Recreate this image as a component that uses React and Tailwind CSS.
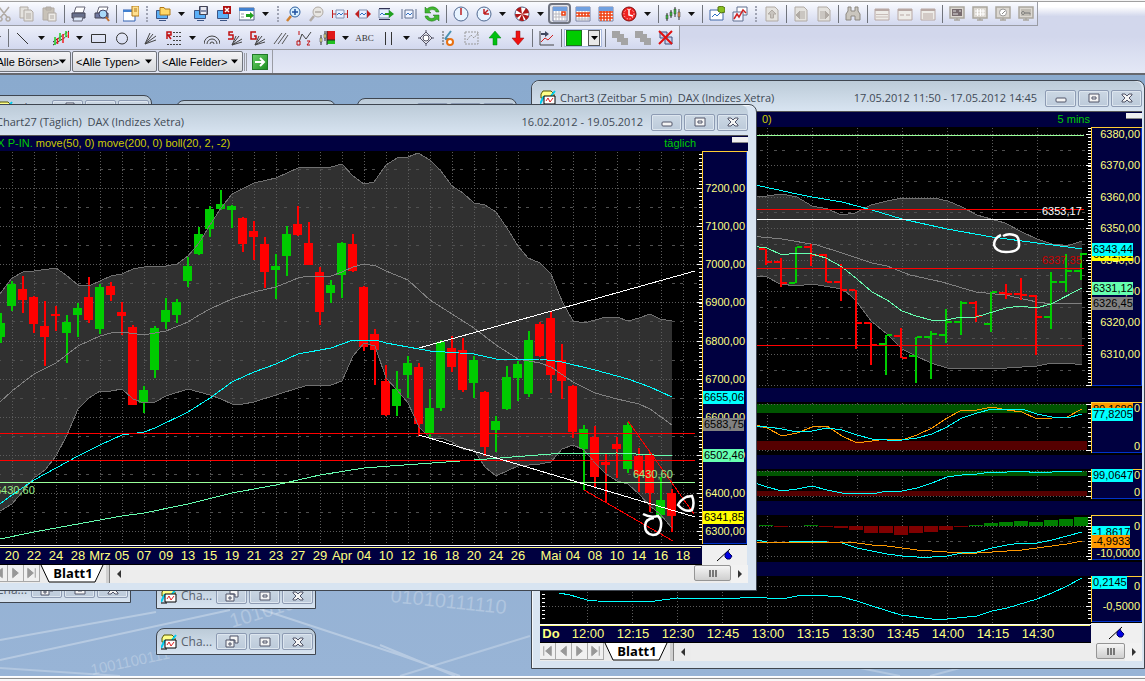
import React from 'react';

const RED = '#ff0000';
const GREEN = '#00cc00';
const NAVY = '#000040';
const AXIS = '#ffff80';

// [bodyTop, bodyBottom, high, low, up]
const CANDLES = [
    [323, 337, 313, 343, 1], [284, 306, 281, 311, 1], [289, 300, 276, 313, 0], [297, 324, 296, 333, 0],
    [326, 337, 301, 366, 0], [314, 316, 306, 331, 0], [322, 333, 315, 363, 1], [308, 315, 303, 337, 1],
    [297, 320, 277, 323, 0], [287, 329, 284, 334, 1], [286, 295, 282, 301, 0], [312, 316, 302, 335, 0],
    [327, 405, 325, 405, 0], [390, 403, 386, 413, 1], [328, 370, 326, 378, 1], [310, 322, 298, 329, 1],
    [302, 315, 299, 323, 1], [266, 281, 257, 287, 1], [234, 254, 227, 255, 1], [209, 229, 206, 237, 1],
    [204, 209, 190, 210, 1], [206, 210, 205, 228, 1], [218, 244, 217, 252, 0], [231, 237, 221, 260, 0],
    [244, 272, 237, 288, 0], [266, 270, 254, 299, 1], [234, 256, 226, 276, 1], [224, 235, 206, 236, 0],
    [243, 265, 222, 265, 0], [272, 312, 267, 325, 0], [285, 293, 280, 303, 1], [243, 275, 242, 298, 1],
    [244, 271, 234, 272, 0], [287, 347, 286, 351, 0], [334, 350, 329, 385, 0], [381, 415, 365, 416, 0],
    [389, 406, 371, 416, 1], [363, 375, 356, 398, 1], [367, 424, 363, 436, 0], [408, 433, 389, 437, 1],
    [342, 408, 340, 411, 1], [348, 367, 336, 372, 0], [350, 390, 338, 392, 0], [360, 383, 356, 398, 1],
    [392, 447, 391, 456, 0], [421, 430, 416, 452, 1], [377, 409, 366, 410, 1], [364, 378, 361, 401, 1],
    [340, 394, 331, 397, 1], [324, 356, 322, 357, 0], [318, 375, 312, 393, 0], [360, 381, 344, 399, 0],
    [386, 432, 385, 438, 0], [429, 449, 425, 490, 1], [437, 477, 426, 488, 0], [462, 465, 454, 503, 0],
    [444, 449, 437, 478, 0], [425, 469, 422, 473, 1], [456, 475, 448, 492, 0], [455, 493, 452, 512, 0],
    [500, 515, 477, 518, 1], [493, 516, 489, 532, 0],
];

const DAY_UPPER = '-24,330 0,294 12,278 23,272 34,271 56,268 66,275 78,285 89,286 100,281 111,276 122,274 133,269 144,267 166,266 177,264 188,256 199,243 210,225 221,208 232,194 254,183 276,178 298,168 309,167 331,167 342,164 353,176 364,184 374,182 386,165 397,158 408,157 418,153 430,160 441,171 452,186 463,193 474,203 485,205 496,212 507,228 518,246 528,258 540,263 551,274 562,301 573,321 584,323 595,320 606,317 617,317 628,321 639,318 650,314 660,319 672,321';
const DAY_LOWER = '672,528 660,514 650,506 639,494 628,484 617,481 606,474 595,463 584,450 573,445 562,449 551,462 540,464 518,466 507,471 496,476 485,467 474,450 463,449 452,442 441,438 430,438 419,427 408,403 397,390 386,378 375,346 364,343 353,356 342,381 331,385 320,386 309,385 298,388 276,395 254,402 243,404 232,404 221,399 210,395 188,389 166,396 155,402 144,403 133,399 122,389 111,391 100,391 89,398 78,409 67,435 56,456 45,470 34,478 12,504 0,511 -24,520';
const DAY_MID = '0,402 12,391 34,374 56,363 78,346 100,336 111,333 122,332 144,335 166,331 188,322 199,315 210,309 232,299 254,292 276,287 298,278 309,276 331,276 342,272 353,267 364,264 376,266 386,271 408,280 430,300 452,314 474,328 496,345 518,359 540,363 551,367 573,382 595,393 617,399 639,404 650,409 672,425';
const DAY_MA50 = '0,504 12,495 34,480 56,468 78,456 100,445 122,435 144,432 155,428 188,412 210,398 232,382 254,372 276,364 298,354 331,348 353,340 376,340 386,343 408,347 430,351 474,354 496,359 507,360 540,359 562,362 595,370 617,376 628,379 650,387 672,397';
const DAY_MA200 = '0,539 34,532 78,524 122,516 144,513 188,504 232,493 276,485 320,475 364,468 390,466 474,460 551,454 617,453 672,456';

const DAYS = [
    ['20', 12], ['22', 34], ['24', 56], ['28', 78], ['Mrz', 100], ['05', 122], ['07', 144], ['09', 166],
    ['13', 188], ['15', 210], ['19', 232], ['21', 254], ['23', 276], ['27', 298], ['29', 320], ['Apr', 342],
    ['04', 364], ['10', 386], ['12', 408], ['16', 430], ['18', 452], ['20', 474], ['24', 496], ['26', 518],
    ['Mai', 551], ['04', 573], ['08', 595], ['10', 617], ['14', 639], ['16', 661], ['18', 683],
];
const DAY_PRICES = [
    ['7200,00', 188], ['7100,00', 226], ['7000,00', 264], ['6900,00', 302], ['6800,00', 341],
    ['6700,00', 379], ['6600,00', 417], ['6500,00', 455], ['6400,00', 493], ['6300,00', 531],
];

// [high, low, open, close, up]
const BARS = [
    [248, 264, 248, 261, 0], [257, 286, 261, 282, 0], [246, 282, 282, 246, 1], [243, 265, 246, 254, 0],
    [253, 281, 254, 281, 0], [263, 300, 281, 289, 0], [289, 348, 289, 322, 0], [322, 364, 322, 344, 0],
    [334, 374, 343, 334, 1], [327, 357, 335, 357, 0], [336, 382, 355, 336, 1], [330, 378, 336, 333, 1],
    [308, 342, 334, 321, 1], [300, 334, 321, 302, 1], [300, 321, 302, 315, 0], [291, 331, 323, 291, 1],
    [283, 298, 292, 293, 0], [277, 299, 293, 294, 0], [294, 354, 295, 316, 0], [271, 328, 316, 281, 1],
    [253, 291, 281, 270, 1], [252, 279, 270, 253, 1],
];
const MIN_UPPER = '751,195 767,195 782,193 797,196 812,205 828,208 841,214 855,212 871,204 887,200 902,197 934,197 948,200 962,206 977,214 1005,222 1022,231 1037,238 1052,243 1067,245 1082,240';
const MIN_LOWER = '1082,364 1067,362 1052,362 1037,365 992,368 947,367 931,362 916,355 902,348 887,333 871,320 857,301 850,294 842,288 812,283 797,285 780,283 767,276 751,275';
const MIN_MID = '751,235 782,238 817,244 842,252 872,262 887,265 910,274 942,281 976,291 1005,294 1037,301 1052,303 1082,302';
const MIN_MA50 = '751,183 797,193 812,196 842,201 872,209 902,218 947,228 992,236 1037,242 1053,244 1082,248';
const MIN_FAST = '751,245 767,247 782,254 797,252 812,253 826,257 842,266 857,278 872,291 887,299 902,310 916,315 931,319 946,319 961,316 976,316 1006,307 1020,305 1036,307 1051,303 1082,287';
const MIN_PRICES = [
    ['6380,00', 133], ['6370,00', 164], ['6360,00', 196], ['6350,00', 227],
    ['6340,00', 259], ['6330,00', 290], ['6320,00', 321], ['6310,00', 353],
];
const TIMES = ['12:00', '12:15', '12:30', '12:45', '13:00', '13:15', '13:30', '13:45', '14:00', '14:15', '14:30'];

const STOCH_K = [423, 427, 435, 432, 426, 425, 435, 442, 440, 438, 439, 434, 427, 417, 409, 409, 406, 409, 411, 418, 417, 416, 408];
const STOCH_D = [425, 426, 428, 431, 430, 427, 429, 434, 438, 439, 439, 437, 433, 426, 417, 412, 408, 408, 408, 413, 416, 417, 413];
const RSI = [481, 486, 490, 488, 485, 489, 492, 492, 493, 490, 490, 487, 482, 476, 474, 473, 471, 471, 470, 472, 471, 470, 470];
const MACD = [538, 541, 542, 540, 540, 541, 542, 547, 550, 553, 555, 556, 556, 555, 552, 551, 547, 544, 542, 542, 539, 535, 531];
const SIGNAL = [541, 541, 541, 541, 541, 541, 541, 542, 544, 545, 547, 549, 550, 551, 552, 552, 551, 550, 549, 547, 545, 543, 540];
const HISTO = [1, -1, 0, 1, -1, -2, -4, -7, -7, -9, -7, -6, -4, -1, 1, 3, 4, 5, 4, 6, 7, 9];
const MOMENTUM = '559,592 570,594 587,599 597,600 637,601 655,600 677,597 723,598 757,596 767,597 782,598 797,595 813,594 842,596 857,600 872,605 901,614 932,618 947,618 977,615 992,610 1007,607 1037,598 1052,592 1067,585 1082,577';

const series = (ys) => ys.map((y, i) => `${752 + i * 15},${y}`).join(' ');
const range = (from, to, step) => {
    const out = [];
    for (let v = from; v <= to; v += step) out.push(v);
    return out;
};

function Line({ points, color, width = 1, fill = 'none' }) {
    return <polyline points={points} fill={fill} stroke={color} strokeWidth={width} shapeRendering="crispEdges" />;
}

function Level({ x1, x2, y, color }) {
    return <rect x={x1} y={y} width={x2 - x1} height="1" fill={color} shapeRendering="crispEdges" />;
}

function Dotted({ x1, x2, y1, y2 }) {
    return <path d={`M${x1} ${y1 + 0.5}L${x2} ${y2 + 0.5}`} stroke="#5c5c5c" strokeDasharray="1 2" shapeRendering="crispEdges" />;
}

function Dashes({ x1, x2, y }) {
    return <path d={`M${x1} ${y + 0.5}H${x2}`} stroke="#505050" strokeDasharray="3 11 3 5" shapeRendering="crispEdges" />;
}

function AxisBox({ x, y, w, h }) {
    return (
        <g shapeRendering="crispEdges">
            <rect x={x} y={y} width={w} height={h} fill={NAVY} />
            <path d={`M${x + w - 0.5} ${y}V${y + h - 0.5}H${x}`} fill="none" stroke="#0033cc" />
            <path d={`M${x + 0.5} ${y + h}V${y + 0.5}H${x + w}`} fill="none" stroke="#ffcc33" />
        </g>
    );
}

function Ticks({ x, from, to, step }) {
    return (
        <g fill="#fff" shapeRendering="crispEdges">
            {range(from, to, step).map((y) => <rect key={y} x={x - 3} y={Math.round(y)} width="3" height="1" />)}
        </g>
    );
}

function Tag({ x, y, w = 41, color, text }) {
    return (
        <g>
            <rect x={x} y={y} width={w} height="13" fill={color} shapeRendering="crispEdges" />
            <text x={x + 1} y={y + 10} fill="#000">{text}</text>
        </g>
    );
}

function PinIcon({ x, y }) {
    return (
        <g transform={`translate(${x} ${y})`}>
            <path d="M0 14L13 2" stroke="#000" fill="none" />
            <path d="M8 7l3-3 1 2 3 3-2 3h-3l-2-2z" fill="#0000e0" stroke="#000060" />
        </g>
    );
}

function DailyChart() {
    return (
        <svg className="block w-[771px] h-[414px] bg-black font-['Liberation_Sans',sans-serif] text-[11px]" viewBox="-24 151 771 414">
            <polygon points={`${DAY_UPPER} ${DAY_LOWER}`} fill="#303030" />
            {DAYS.map(([label, x]) => <Dotted key={label + x} x1={x + 0.5} x2={x + 0.5} y1={151} y2={544} />)}
            {DAY_PRICES.map(([label, y]) => <Dotted key={label} x1={-24} x2={699} y1={y} y2={y} />)}
            {range(169, 530, 38.1).map((y) => <Dashes key={y} x1={-24} x2={699} y={Math.round(y)} />)}
            {CANDLES.map(([top, bottom, high, low, up], i) => (
                <g key={i} fill={up ? GREEN : RED} shapeRendering="crispEdges">
                    <rect x={i * 11} y={high} width="2" height={low - high} />
                    <rect x={i * 11 - 4} y={top} width="9" height={bottom - top} />
                </g>
            ))}
            <Line points={DAY_UPPER} color="#707070" />
            <Line points={DAY_LOWER} color="#707070" />
            <Line points={DAY_MID} color="#808080" />
            <Line points={DAY_MA50} color="#00ffff" />
            <Line points={DAY_MA200} color="#66ffb0" />
            <Level x1={-24} x2={695} y={433} color={RED} />
            <Level x1={-24} x2={695} y={460} color={RED} />
            <Level x1={-24} x2={695} y={482} color="#99ff99" />
            <Line points="419,348 695,271" color="#fff" />
            <Line points="419,435 695,517" color="#fff" />
            <Line points="584,490 673,541" color={RED} />
            <Line points="628,421 694,514" color={RED} />
            <text x="633" y="478" fill="#99ee88">6430,60</text>
            <text x="-5" y="494" fill="#99ee88">6430,60</text>
            <path d="M643 514q7 4 15 2q4 4 3 10q-1 9-8 9q-8-1-8-9q0-7 9-8" fill="none" stroke="#fff" strokeWidth="2.500" />
            <path d="M686 497l6-1q3 7 0 14q-7 3-14-5q2-5 10-9" fill="none" stroke="#fff" strokeWidth="2.500" />

            <Ticks x={702} from={154} to={542} step={3.81} />
            <g fill="#fff">{DAY_PRICES.map(([label, y]) => <rect key={label} x="697" y={y} width="5" height="1" />)}</g>
            <AxisBox x={702} y={151} w={45} h={393} />
            <g fill={AXIS} textAnchor="end">
                {DAY_PRICES.map(([label, y]) => <text key={label} x="745" y={y + 4}>{label}</text>)}
            </g>
            <Tag x={703} y={391} color="#00ffff" text="6655,06" />
            <Tag x={703} y={418} color="#808080" text="6583,75" />
            <Tag x={703} y={449} color="#66ffb0" text="6502,46" />
            <Tag x={703} y={511} color="#ffff00" text="6341,85" />

            <g shapeRendering="crispEdges">
                <rect x="-24" y="544" width="726" height="21" fill="#000" />
                <rect x="-24" y="545" width="726" height="1" fill="#fff" />
                <rect x="-24" y="546" width="726" height="18" fill={NAVY} />
                <rect x="-24" y="547" width="725" height="1" fill={AXIS} />
                <rect x="702" y="545" width="45" height="20" fill="#f0f0f0" />
                <rect x="702" y="544" width="45" height="1" fill="#000" />
            </g>
            <g fill={AXIS} textAnchor="middle" className="text-[13px]">
                {DAYS.map(([label, x]) => <text key={label + x} x={x} y="560">{label}</text>)}
            </g>
            <PinIcon x={717} y={547} />
        </svg>
    );
}

function MinuteChart() {
    return (
        <svg className="block w-[602px] h-[516px] shrink-0 bg-black font-['Liberation_Sans',sans-serif] text-[11px]" viewBox="540 126 602 516">
            <polygon points={`${MIN_UPPER} ${MIN_LOWER}`} fill="#303030" />
            {TIMES.map((t, i) => (
                <g key={t}>
                    <Dotted x1={587.5 + i * 45} x2={587.5 + i * 45} y1={126} y2={384} />
                    <Dotted x1={587.5 + i * 45} x2={587.5 + i * 45} y1={401} y2={452} />
                    <Dotted x1={587.5 + i * 45} x2={587.5 + i * 45} y1={468} y2={498} />
                    <Dotted x1={587.5 + i * 45} x2={587.5 + i * 45} y1={514} y2={559} />
                    <Dotted x1={587.5 + i * 45} x2={587.5 + i * 45} y1={575} y2={621} />
                </g>
            ))}
            {[133, 164, 196, 227, 259, 290, 321, 353, 384].map((y) => <Dotted key={y} x1={540} x2={1087} y1={y} y2={y} />)}
            {[149, 180, 211, 243, 274, 306, 337, 369].map((y) => <Dashes key={y} x1={540} x2={1087} y={y} />)}
            <Line points={MIN_UPPER} color="#707070" />
            <Line points={MIN_LOWER} color="#707070" />
            <Line points={MIN_MID} color="#808080" />
            {BARS.map(([high, low, open, close, up], i) => (
                <g key={i} fill={up ? GREEN : RED} shapeRendering="crispEdges">
                    <rect x={765 + i * 15} y={high} width="2" height={low - high} />
                    <rect x={759 + i * 15} y={open - 1} width="6" height="2" />
                    <rect x={767 + i * 15} y={close - 1} width="5" height="2" />
                </g>
            ))}
            <Line points={MIN_MA50} color="#00ffff" />
            <Line points={MIN_FAST} color="#66ffb0" />
            <Level x1={540} x2={1084} y={134} color="#99ff99" />
            <Level x1={540} x2={1084} y={208} color={RED} />
            <Level x1={540} x2={1084} y={218} color="#fff" />
            <Level x1={540} x2={1084} y={267} color={RED} />
            <Level x1={540} x2={1084} y={344} color={RED} />
            <text x="1042" y="214" fill="#fff">6353,17</text>
            <text x="1042" y="263" fill="#cc0000">6337,35</text>
            <path d="M1001 234q-7 3-7 10q2 7 12 7q14 0 13-8q0-8-5-9q-6-2-11 1" fill="none" stroke="#fff" strokeWidth="2.500" />

            {/* indicator captions */}
            <g fill={NAVY}>
                <rect x="540" y="387" width="602" height="14" />
                <rect x="540" y="454" width="602" height="14" />
                <rect x="540" y="500" width="602" height="14" />
                <rect x="540" y="561" width="602" height="14" />
            </g>
            <g shapeRendering="crispEdges">
                <rect x="540" y="403" width="547" height="9" fill="#005500" />
                <rect x="540" y="440" width="547" height="9" fill="#550000" />
                <rect x="540" y="470" width="547" height="5" fill="#005500" />
                <rect x="540" y="490" width="547" height="5" fill="#550000" />
            </g>
            {[403, 449, 470, 495, 525, 555, 585, 605].map((y) => <Dotted key={y} x1={540} x2={1087} y1={y} y2={y} />)}
            <Dashes x1={540} x2={1087} y={426} />
            <Dashes x1={540} x2={1087} y={540} />
            <Line points={series(STOCH_K)} color="#ff9900" />
            <Line points={series(STOCH_D)} color="#00ffff" />
            <Line points={series(RSI)} color="#00ffff" />
            {HISTO.map((v, i) => (
                <rect key={i} x={759 + i * 15} y={v > 0 ? 525 - v : 525} width="14" height={Math.abs(v)} fill={v > 0 ? '#008000' : '#800000'} />
            ))}
            <Line points={series(MACD)} color="#00ffff" />
            <Line points={series(SIGNAL)} color="#ff9900" />
            <Line points={MOMENTUM} color="#00ffff" />

            <Ticks x={1091} from={127} to={384} step={3.14} />
            <Ticks x={1091} from={403} to={450} step={4.6} />
            <Ticks x={1091} from={470} to={496} step={5} />
            <Ticks x={1091} from={516} to={558} step={3} />
            <Ticks x={1091} from={577} to={620} step={4} />
            <Ticks x={545} from={577} to={620} step={4} />
            <g fill="#fff">
                {[133, 164, 196, 227, 259, 290, 321, 353, 384, 403, 449, 495, 525, 555, 605].map((y) => <rect key={y} x="1086" y={y} width="5" height="1" />)}
            </g>
            <AxisBox x={1091} y={126} w={51} h={259} />
            <AxisBox x={1091} y={401} w={51} h={51} />
            <AxisBox x={1091} y={468} w={51} h={30} />
            <AxisBox x={1091} y={514} w={51} h={45} />
            <AxisBox x={1091} y={575} w={51} h={46} />
            <g fill={AXIS} textAnchor="end">
                {MIN_PRICES.map(([label, y]) => <text key={label} x="1140" y={y + 4}>{label}</text>)}
                <text x="1140" y="411">0</text>
                <text x="1140" y="449">0</text>
                <text x="1140" y="478">0</text>
                <text x="1140" y="495">0</text>
                <text x="1140" y="529">0</text>
                <text x="1140" y="556">-10,0000</text>
                <text x="1140" y="589">0</text>
                <text x="1140" y="609">-0,5000</text>
            </g>
            <Tag x={1092} y={247} color="#ffff00" text="6341,81" />
            <Tag x={1092} y={242} color="#00ffff" text="6343,44" />
            <Tag x={1092} y={281} color="#66ffb0" text="6331,12" />
            <Tag x={1092} y={296} color="#808080" text="6326,45" />
            <Tag x={1092} y={402} color="#ff9900" text="80,1689" />
            <Tag x={1092} y={407} color="#00ffff" text="77,8205" />
            <Tag x={1092} y={468} color="#00ffff" text="99,0647" />
            <Tag x={1092} y={525} w={38} color="#00ffff" text="-1,8617" />
            <Tag x={1092} y={534} w={38} color="#ff9900" text="-4,9933" />
            <Tag x={1092} y={575} w={35} color="#00ffff" text="0,2145" />

            <g shapeRendering="crispEdges">
                <rect x="540" y="622" width="551" height="20" fill="#000" />
                <rect x="540" y="623" width="551" height="1" fill="#fff" />
                <rect x="540" y="624" width="551" height="17" fill={NAVY} />
                <rect x="540" y="624" width="550" height="1" fill={AXIS} />
                <rect x="1091" y="622" width="51" height="20" fill="#f0f0f0" />
            </g>
            <g fill={AXIS} textAnchor="middle" className="text-[13px]">
                <text x="551" y="637" fontWeight="bold">Do</text>
                {TIMES.map((t, i) => <text key={t} x={588 + i * 45} y="637">{t}</text>)}
            </g>
            <PinIcon x={1109} y={624} />
        </svg>
    );
}

function ChartIcon() {
    return (
        <svg className="size-4 shrink-0" viewBox="0 0 16 16">
            <path d="M3 1h8l3 3v4H1V4z" fill="#ffff88" stroke="#555500" />
            <path d="M0 14L4 6M11 6l4-5" stroke="#00ccee" strokeWidth="2" />
            <path d="M4 6h11v8H4z" fill="#fff" stroke="#000" />
            <path d="M6 11l2-3 2 4 3-4" stroke="#e02020" fill="none" />
            <path d="M0 15h6" stroke="#000" />
        </svg>
    );
}

const WIN_GLYPHS = {
    Minimieren: <rect x="3" y="7" width="10" height="4" rx="1" />,
    Maximieren: <path d="M3 3h10v8H3zM6 6h4v2H6z" />,
    Wiederherstellen: <path d="M6 1h8v7h-3v-3H6zM2 5h8v7H2zM5 8h2v2H5z" />,
    Schließen: <path d="M3 3h3l2 2 2-2h3v1l-3 3 3 3v1h-3l-2-2-2 2H3v-1l3-3-3-3z" />,
};

function WinButtons({ names }) {
    return (
        <div className="flex gap-0.5">
            {names.map((name) => (
                <button key={name} type="button" aria-label={name} className="w-[31px] h-[17px] flex items-center justify-center rounded-xs border border-[#8d9bb3] bg-linear-to-b from-[#ccd8e4] to-[#bccada] shadow-[inset_0_0_0_1px_#dde6ef]">
                    <svg className="w-4 h-[14px]" viewBox="0 0 16 14" fill="#f4f4f4" stroke="#505468">{WIN_GLYPHS[name]}</svg>
                </button>
            ))}
        </div>
    );
}

function MiniWindow({ className }) {
    return (
        <section className={`absolute w-40 h-[27px] flex items-center px-1 gap-1 rounded-t-lg border border-[#3f4650] bg-linear-to-b from-[#bccbd8] to-[#d8e4f1] ${className}`}>
            <ChartIcon />
            <span className="flex-1 font-['Open_Sans',sans-serif] text-xs leading-4 text-[#56616d]">Cha...</span>
            <WinButtons names={['Wiederherstellen', 'Maximieren', 'Schließen']} />
        </section>
    );
}

function SheetBar({ thumb }) {
    const arrows = [
        ['Erstes Blatt', 'M4 3v10M12 3v10L6 8z'],
        ['Voriges Blatt', 'M11 3v10L5 8z'],
        ['Nächstes Blatt', 'M5 3v10l6-5z'],
        ['Letztes Blatt', 'M12 3v10M4 3v10l6-5z'],
    ];
    return (
        <div className="flex h-[18px] bg-[#ececec] items-stretch">
            {arrows.map(([label, d]) => (
                <button key={label} type="button" aria-label={label} className="w-4 h-[17px] shrink-0 bg-[#f0f0f0] border-r border-b border-[#a8a8a8]">
                    <svg className="w-full h-full" viewBox="0 0 16 16" fill="#989898" stroke="#989898"><path d={d} /></svg>
                </button>
            ))}
            <button type="button" className="relative w-[66px] shrink-0 pb-1 font-['Open_Sans'] text-[13px] leading-4 font-bold text-black">
                <svg className="absolute inset-0 w-full h-full" viewBox="0 0 66 18" preserveAspectRatio="none">
                    <path d="M1 0L9 17H55L63 0z" fill="#fff" />
                    <path d="M1 0L9 17H55L63 0" fill="none" stroke="#000" />
                </svg>
                <span className="relative">Blatt1</span>
            </button>
            <span className="w-1 bg-[#d0d0d0] border-r border-[#808080]" />
            <button type="button" aria-label="Nach links" className="w-[17px] flex items-center justify-center">
                <svg className="size-2" viewBox="0 0 8 8"><path d="M6 0v8L2 4z" fill="#333" /></svg>
            </button>
            <div className="flex-1 flex justify-end bg-[#ededed]">
                <div className={`${thumb} h-4 flex items-center justify-center gap-px rounded-xs border border-[#959595] bg-linear-to-b from-[#f5f5f5] to-[#cfcfcf]`}>
                    <i className="w-0.5 h-[7px] bg-[#777]" />
                    <i className="w-0.5 h-[7px] bg-[#777]" />
                    <i className="w-0.5 h-[7px] bg-[#777]" />
                </div>
            </div>
            <button type="button" aria-label="Nach rechts" className="w-[17px] flex items-center justify-center bg-[#f2f2f2]">
                <svg className="size-2" viewBox="0 0 8 8"><path d="M2 0v8l4-4z" fill="#333" /></svg>
            </button>
        </div>
    );
}

function ChartWindow({ className, title, symbol, period, caption, interval, thumb, children }) {
    return (
        <section className={`absolute flex flex-col rounded-t-lg border border-[#3f4650] shadow-[inset_1px_1px_0_#f4f8fc] bg-[#d8e4f1] ${className}`}>
            <header className="h-[30px] flex items-center gap-1 pt-1 rounded-t-lg bg-linear-to-b from-[#bccbd8] to-[#d8e4f1] pl-2 font-['Open_Sans',sans-serif] text-[11px] leading-4 text-[#3f4a56] whitespace-nowrap">
                <ChartIcon />
                <h2 className="whitespace-pre">{title}  {symbol}</h2>
                <span className="ml-auto mr-1">{period}</span>
                <WinButtons names={['Minimieren', 'Maximieren', 'Schließen']} />
            </header>
            <div className="ml-2 flex flex-col border-t border-[#555] border-b-white">
                <div className="h-[15px] flex items-center bg-[#000040] font-['Liberation_Sans',sans-serif] text-[11px] leading-[15px] text-[#cccc00]">
                    {caption}
                    <span className="ml-auto text-[#00cc00]">{interval}</span>
                    <span className="w-4 h-[6px] mb-2 ml-9 bg-[#f0f0f0] border-b border-[#888]" />
                </div>
                {children}
                <SheetBar thumb={thumb} />
            </div>
        </section>
    );
}

const GREY = '#b0aaa4';
const page = <path d="M2 1h9l3 3v11H2z" fill="#e4e2de" stroke={GREY} />;
const monitor = <path d="M1.500 4.500h11v8h-11zM4 14.500h7" fill="#5cb0f8" stroke="#3c5484" />;
const greyScreen = <path d="M1 1h14v11H1zM5 14h6M8 12v2" fill="#dcd8d2" stroke="#aaa69e" strokeWidth="1.5" />;
const dial = <circle cx="8" cy="8" r="7" fill="#e8f4ff" stroke="#506890" />;
const calendar = (
    <>
        <path d="M1 1h14v14H1z" fill="#fff" stroke="#7880a0" />
        <path d="M1 1h14v4H1z" fill="#70a0e0" />
    </>
);
const smallFan = <path d="M5 15l4-9M5 15l7-9M5 15l10-6M5 15l10-3" stroke="#444" fill="none" />;
const greyPanel = (
    <>
        <path d="M1 3h14v11H1z" fill="#eeece8" stroke="#b8a8a4" />
        <path d="M1 3h14v2H1z" fill="#b8a8a4" />
    </>
);

const ICONS = {
    cut: <path d="M3 1l8 10M13 1L5 11M4 11a2 2 0 1 0 .1 0M12 11a2 2 0 1 0 .1 0" fill="none" stroke={GREY} strokeWidth="1.5" />,
    copy: <><path d="M1 1h8v11H1z" fill="#e4e2de" stroke={GREY} /><path d="M5 4h7l2 2v9H5zM7 8h5M7 10h5M7 12h5" fill="#e4e2de" stroke={GREY} /></>,
    paste: <><path d="M1 2h11v12H1zM4 1h5v3H4z" fill="#c8c2b8" stroke={GREY} /><path d="M6 7h8v8H6zM8 10h4M8 12h4" fill="#eceae6" stroke={GREY} /></>,
    print: <><path d="M5 1h9l-2 6H3z" fill="#fff" stroke="#667" /><path d="M1 7h13v5H1z" fill="#68708c" stroke="#445" /><path d="M3 11h9l-1 4H2z" fill="#dde8f8" stroke="#667" /></>,
    preview: <><path d="M5 1h9l-2 6H3z" fill="#fff" stroke="#667" /><path d="M1 7h13v5H1z" fill="#7078a0" stroke="#445" /><circle cx="9" cy="8" r="4" fill="#a8d8f8" stroke="#446" /><path d="M12 11l3 4" stroke="#c07030" strokeWidth="2" /></>,
    note: <><path d="M0 4h12v11H0z" fill="#fff" stroke="#3060b0" /><path d="M0 4h12v2H0z" fill="#4080d0" /><path d="M9 0h7v10H9zM11 3h3M11 5h3" fill="#ffe090" stroke="#b07818" /></>,
    open: <>{monitor}<path d="M5 1.500h4l1 1.500h5v6H5z" fill="#ffd868" stroke="#b07818" /></>,
    save: <>{monitor}<path d="M6.500 .5h8v8h-8z" fill="#8890ac" stroke="#445" /><path d="M8 1h5v3H8zM8 6h5v2H8z" fill="#e8e8f0" /></>,
    close: <>{monitor}<path d="M7 0h8v8H7z" fill="#b01010" /><path d="M9 2l4 4M13 2L9 6" stroke="#fff" strokeWidth="1.5" /></>,
    exportWin: <><path d="M0 2h15v12H0z" fill="#fff" stroke="#506080" /><path d="M0 2h15v3H0z" fill="#4080d0" /><path d="M7 8h4V6l4 3.500-4 3.500v-2H7z" fill="#20a020" /><path d="M2 8h3M2 11h3" stroke="#99a" /></>,
    zoomIn: <><circle cx="9" cy="6" r="5" fill="#d8f0ff" stroke="#3060a0" /><path d="M6 6h6M9 3v6" stroke="#2050a0" strokeWidth="1.5" /><path d="M5 10l-4 5" stroke="#d08030" strokeWidth="2.500" /></>,
    zoomOut: <><circle cx="9" cy="6" r="5" fill="#e8e6e2" stroke={GREY} /><path d="M6 6h6" stroke={GREY} strokeWidth="1.5" /><path d="M5 10l-4 5" stroke={GREY} strokeWidth="2.500" /></>,
    widen: <><path d="M4 4h8v8H4z" fill="#e8f0ff" stroke="#8090b0" /><path d="M5 9l2-2 2 2 2-2" stroke="#3070c0" fill="none" /><path d="M.5 4v8M15.500 4v8M0 8h4M16 8h-4" stroke="#c02020" /></>,
    shrink: <><path d="M4 4h8v8H4z" fill="#e8f0ff" stroke="#8090b0" /><path d="M5 9l2-2 2 2 2-2" stroke="#3070c0" fill="none" /><path d="M0 8l4-4v8zM16 8l-4-4v8z" fill="#c02020" /></>,
    shift: <><path d="M1 3h10v9H1z" fill="#e8f0ff" stroke="#8090b0" /><path d="M2 9l2-2 2 2 2-2" stroke="#3070c0" fill="none" /><path d="M7 7h4V4l5 4-5 4V9H7z" fill="#20a020" /><path d="M1 2.500h11M1 13.500h11" stroke="#335" /></>,
    bracket: <><path d="M4 4h8v8H4z" fill="#f0f4ff" stroke="#607090" /><path d="M1 3v10M15 3v10" stroke="#607090" /><path d="M5 9l2-2 2 2 2-2" stroke="#3070c0" fill="none" /></>,
    refresh: <><path d="M1 1v6h6L5 5c2-2 6-2 7 1h3C14 1 7-1 3 3z" fill="#40b830" stroke="#207018" strokeWidth=".5" /><path d="M15 15V9H9l2 2c-2 2-6 2-7-1H1c1 5 8 7 12 3z" fill="#40b830" stroke="#207018" strokeWidth=".5" /></>,
    clock12: <>{dial}<path d="M8 2v7" stroke="#c02020" strokeWidth="1.500" /></>,
    clock3: <>{dial}<path d="M8 8h5M8 8l4-4M8 8V3" stroke="#c02020" strokeWidth="1.500" /></>,
    wheel: <><circle cx="8" cy="8" r="7" fill="#fff" stroke="#506080" /><path d="M8 8L2 4a7 7 0 0 1 5-3zM8 8l7-1a7 7 0 0 0-3-5zM8 8l4 6a7 7 0 0 0 3-4zM8 8l-3 6a7 7 0 0 0 5 1zM8 8l-7 0a7 7 0 0 0 2 4z" fill="#b01818" /></>,
    calDay: <>{calendar}<path d="M4 5v10M7 5v10M10 5v10M13 5v10M1 8h14M1 11h14" stroke="#b8b8c0" /><path d="M10 6h3v3h-3z" fill="#fff" stroke="#f04010" strokeWidth="1.500" /></>,
    calWeek: <>{calendar}<path d="M4 5v10M7 5v10M10 5v10M13 5v10M1 13h14" stroke="#b8b8c0" /><path d="M1 7h14M1 10h14M4 7v3M7 7v3M10 7v3M13 7v3" stroke="#f04010" strokeWidth="1.500" /></>,
    calMonth: <>{calendar}<path d="M3 5v10M6 5v10M9 5v10M12 5v10M1 6h14M1 9h14M1 12h14" stroke="#f04010" strokeWidth="1.500" /></>,
    redClock: <><circle cx="8" cy="8" r="7" fill="#f02020" stroke="#801010" /><circle cx="8" cy="8" r="5" fill="none" stroke="#fff" strokeDasharray="1 2" /><path d="M8 3v6l4 1" stroke="#fff" strokeWidth="1.5" fill="none" /></>,
    candles: <><path d="M2 7v8M6 4v8M10 1v10M14 3v11" stroke="#333" /><path d="M1 9h2v4H1zM5 6h2v4H5zM9 3h2v5H9z" fill="#40c040" stroke="#333" strokeWidth=".5" /><path d="M13 6h2v5h-2z" fill="#f0a060" stroke="#333" strokeWidth=".5" /></>,
    chartBox: <><path d="M1 4h13v10H1z" fill="#fff" stroke="#4068a8" /><path d="M3 11l3-3 2 2 4-4" stroke="#3070c0" fill="none" /><path d="M9 1l4-1 3 2v4l-4 1-3-2z" fill="#88c020" stroke="#507010" /></>,
    chartPair: <><path d="M5 1h10v8H5z" fill="#fff" stroke="#607090" /><path d="M1 6h10v9H1z" fill="#f4f4ff" stroke="#607090" /><path d="M2 13l3-5 2 3 4-7 3 3" stroke="#d02020" fill="none" strokeWidth="1.500" /></>,
    pageUp: <>{page}<path d="M8 4l4 4H9.500v4h-3V8H4z" fill="#c8c4be" stroke={GREY} /></>,
    pagePrev: <>{page}<path d="M7 5v8L3 9zM9 5v8M11 5v8" fill={GREY} stroke={GREY} /></>,
    pageNext: <>{page}<path d="M9 5v8l4-4zM7 5v8M5 5v8" fill={GREY} stroke={GREY} /></>,
    find: <path d="M3 1h3v4h4V1h3v4l2 3v6h-5v-4H6v4H1V8l2-3z" fill="#cac6be" stroke="#8c8880" />,
    panel1: <>{greyPanel}<path d="M2 8.500h12M2 11h12" stroke="#c8bcb8" /></>,
    panel2: <>{greyPanel}<path d="M3 9h4M9 9h4" stroke="#b8a8a4" /></>,
    panel3: <>{greyPanel}<path d="M3 8h10M3 10h10M3 12h10" stroke="#b8a8a4" /></>,
    screen1: <>{greyScreen}<path d="M3 3h10v7H3z" fill="#786c70" /><path d="M4 5h3M4 8h5M10 5h2" stroke="#ddd" /></>,
    screen2: <>{greyScreen}<path d="M3 5h10M3 8h10M5.500 3v7M8.500 3v7M11 3v7" stroke="#fff" /></>,
    screen3: <>{greyScreen}<circle cx="8" cy="6.500" r="3.500" fill="#fff" stroke="#999" /><path d="M7 8l3-3" stroke="#888" /></>,
    screen4: <>{greyScreen}<path d="M3 3h10v7H3z" fill="#c0bcb4" /><path d="M7 7h5v1.500M5 5.500a1.500 1.500 0 1 0 .1 0" stroke="#777" fill="none" /></>,

    line: <path d="M2 3l11 11" stroke="#333" />,
    channel: <><path d="M0 12L16 1M0 15L16 5" stroke="#222" strokeDasharray="2 1" /><path d="M2 7v8M7 3v8M13 1v6" stroke="#20d020" strokeWidth="1.500" /><path d="M4.500 8v6M10 4v9M15.500 2v6" stroke="#f02020" strokeWidth="1.500" /></>,
    rect: <path d="M.5 4.500h14v8H.5z" fill="none" stroke="#333" />,
    circle: <circle cx="8" cy="8.500" r="5.500" fill="none" stroke="#333" />,
    fan: <path d="M2 14L7 3M2 14l8-10M2 14l11-8M2 14l11-4" stroke="#444" fill="none" />,
    regress: <><path d="M7 2.500h9M7 6.500h9M7 10.500h9M1 14.500h15" stroke="#444" strokeDasharray="2 1" /><path d="M1 9V2h4v3H2l3 4" fill="none" stroke="#c01010" strokeWidth="1.5" /></>,
    arcs: <path d="M0 14a8 8 0 0 1 16 0M3 14a5 5 0 0 1 10 0M6 14a2 2 0 0 1 4 0" fill="none" stroke="#444" />,
    speed: <>{smallFan}<path d="M6 2H2v3h4v4H1" fill="none" stroke="#c01010" strokeWidth="1.500" /></>,
    gann: <>{smallFan}<path d="M6 2H1v7h5V6H4" fill="none" stroke="#c01010" strokeWidth="1.500" /></>,
    parallels: <path d="M1 14L9 3M5 14l8-11M9 14l6-9" stroke="#555" />,
    waves: <><path d="M3 12l3-8 4 5 5-7" stroke="#444" fill="none" /><path d="M3 1v4M1 11h3v4H1zM11 11h3l-3 4h3" stroke="#c01010" fill="none" /></>,
    candleColors: <><path d="M2 5v10M6 1v10" stroke="#333" /><path d="M1 8h2v4H1zM5 4h2v4H5z" fill="#eee890" stroke="#333" strokeWidth=".5" /><path d="M8 1h8v9H8z" fill="#e01818" /><path d="M8 10h8v4H8z" fill="#20c020" /><path d="M8 1v14M8 10h8" stroke="#222" /></>,
    verticals: <path d="M5.500 2v13M11.500 2v13" stroke="#333" />,
    target: <><path d="M8 0v16M0 8h16" stroke="#556" /><path d="M8 2l6 6-6 6-6-6z" fill="#e8e8f0" stroke="#556" /><circle cx="8" cy="8" r="3" fill="#fff" stroke="#556" /></>,
    brush: <><path d="M2 1v14" stroke="#555" strokeDasharray="2 1" /><path d="M4 9L10 1M4 9l4 0" stroke="#4890b0" strokeWidth="2" /><circle cx="9" cy="12" r="3" fill="#fff" stroke="#e87010" strokeWidth="2" /></>,
    grid: <path d="M1 2h13v12H1zM3 10l4-5 3 3 4-5" fill="none" stroke="#999" strokeDasharray="2 1" />,
    up: <path d="M8 1l6 7h-4v7H6V8H2z" fill="#00c010" stroke="#008010" strokeWidth=".5" />,
    down: <path d="M8 15l6-7h-4V1H6v7H2z" fill="#f01010" stroke="#901010" strokeWidth=".5" />,
    shiftChart: <><path d="M1 1v14h14" stroke="#444" fill="none" /><path d="M2 12l4-4 3 2 5-5" stroke="#d02020" fill="none" /><path d="M2 3h4V1l4 3-4 3V5H2z" fill="#404860" /></>,
    blobs: <path d="M0 1h8v3h4v4h4v7h-7v-3H5V8H0z" fill="#a4a4a4" />,
    remove: <><path d="M2 2h7v6H2zM7 7h7v7H7z" fill="#c8d0e8" stroke="#405080" /><path d="M1 1l13 13M14 1L1 14" stroke="#e01010" strokeWidth="2" /></>,
};

const ROW1 = ['cut', 'copy', 'paste', '|', 'print', 'preview', '|', 'note', ':', 'open', 'v', 'save', 'close', 'exportWin', 'v', ':', 'zoomIn', 'zoomOut', 'widen', 'shrink', 'shift', 'bracket', 'refresh', '|', 'clock12', 'clock3', 'v', 'wheel', 'v', 'calDay!', 'calWeek', 'calMonth', 'redClock', 'v', '|', 'candles', 'v', '|', 'chartBox', 'chartPair', ':', 'pageUp', '|', 'pagePrev', 'pageNext', '|', 'find', '|', 'panel1', 'panel2', 'panel3', '|', 'screen1', 'screen2', 'screen3', 'screen4'];
const ROW2 = ['v', '|', 'line', 'v', 'channel', 'v', 'rect', 'circle', '|', 'fan', 'regress', 'v', 'arcs', 'speed', 'gann', 'parallels', 'waves', 'candleColors', 'v', 'text', 'verticals', 'v', 'target', 'brush', 'grid', 'up', 'down', '|', 'shiftChart', '|'];
const ROW2_END = ['|', 'blobs', 'blobs', 'remove'];

function ToolItem({ name }) {
    if (name === '|') return <span className="w-[6px] shrink-0 flex justify-center"><i className="w-px h-[18px] bg-[#70747c]" /></span>;
    if (name === ':') return <span className="w-[9px] shrink-0 flex justify-center"><i className="w-0.5 h-4 border-l-2 border-dotted border-[#a0a4b4]" /></span>;
    if (name === 'v') {
        return (
            <button type="button" aria-label="Auswahl" className="w-[15px] h-5 shrink-0 flex items-center justify-center">
                <svg className="w-[7px] h-1" viewBox="0 0 7 4"><path d="M0 0h7L3.500 4z" fill="#111" /></svg>
            </button>
        );
    }
    const active = name.endsWith('!');
    const key = name.replace('!', '');
    return (
        <button type="button" aria-label={key} className={`w-[23px] h-[21px] shrink-0 flex items-center justify-center ${active ? 'rounded-sm border-2 border-[#707480] bg-[#e4e6ec]' : ''}`}>
            {key === 'text'
                ? <span className="font-['Liberation_Serif'] text-[9px] leading-3 text-[#333]">ABC</span>
                : <svg className="size-4 shrink-0" viewBox="0 0 16 16">{ICONS[key]}</svg>}
        </button>
    );
}

function Filter({ label, value }) {
    return (
        <label className="relative block w-[85px] h-[21px]">
            <select aria-label={label} className="block appearance-none w-full h-full pl-[3px] rounded-xs border border-[#70747c] bg-linear-to-b from-[#f4f4f6] to-[#d8dade] font-['Liberation_Sans',sans-serif] text-[11px] leading-4 text-black">
                <option>{value}</option>
            </select>
            <svg className="absolute right-[5px] top-2 w-[7px] h-[5px] pointer-events-none" viewBox="0 0 7 4"><path d="M0 0h7L3.500 4z" fill="#000" /></svg>
        </label>
    );
}

function Toolbars() {
    return (
        <div className="bg-linear-to-b from-[#d2d7ec] via-[#d2d7ec] to-[#e4e8f6] border-b-2 border-[#66686e] overflow-hidden">
            <div className="h-[2px] border-b border-[#a0a0a0] bg-[#f4f4f4]" />
            <div className="bg-linear-to-b from-white from-20% to-[#d2d7ec] to-60%">
                <div className="flex items-center w-[1046px] h-6 -ml-2 border-r border-b border-[#9a9ca4] bg-linear-to-b from-[#fafbff] to-[#d2d8ee]">
                    {ROW1.map((name, i) => <ToolItem key={i} name={name} />)}
                </div>
            </div>
            <div className="flex items-center w-[690px] h-6 -ml-[10px] border-r border-b border-[#9a9ca4] bg-linear-to-b from-[#eceffa] to-[#d2d8ee]">
                {ROW2.map((name, i) => <ToolItem key={i} name={name} />)}
                <button type="button" aria-label="Farbe" className="w-[38px] h-[18px] shrink-0 p-px flex justify-between items-center bg-white border border-[#a8b8dc]">
                    <span className="size-4 bg-[#00cc00] border border-[#207020]" />
                    <span className="w-3 h-4 flex items-center justify-center bg-[#e8e8e8] border border-[#555]">
                        <svg className="w-[7px] h-1 shrink-0" viewBox="0 0 7 4"><path d="M0 0h7L3.500 4z" fill="#000" /></svg>
                    </span>
                </button>
                {ROW2_END.map((name, i) => <ToolItem key={i} name={name} />)}
            </div>
            <div className="flex items-center gap-px w-[287px] h-[23px] -ml-[14px] border-r border-[#9a9ca4]">
                <Filter label="Börsen" value="<Alle Börsen>" />
                <Filter label="Typen" value="<Alle Typen>" />
                <Filter label="Felder" value="<Alle Felder>" />
                <span className="w-[3px] h-[18px] border-x border-[#9a9ca4]" />
                <button type="button" aria-label="Los" className="size-4 ml-1 flex items-center justify-center border border-[#207828] bg-linear-to-br from-[#68d068] to-[#189020]">
                    <svg className="size-3" viewBox="0 0 12 12"><path d="M1 6h9M6 2l4 4-4 4" stroke="#fff" strokeWidth="2" fill="none" /></svg>
                </button>
            </div>
        </div>
    );
}

function Wallpaper() {
    return (
        <svg className="absolute inset-0 w-full h-full font-['Liberation_Sans']" viewBox="0 75 1145 601" preserveAspectRatio="xMinYMin slice" fill="none" stroke="#fff">
            <path d="M0 660L230 610M0 640L156 612M260 609L400 655L460 676M380 645L455 676" strokeOpacity=".3" strokeWidth="2" />
            <path d="M0 668L120 676M400 676L530 636M860 668L900 676M960 668L930 676" strokeOpacity=".25" strokeWidth="2" />
            <g fill="#fff" fillOpacity=".25" stroke="none">
                <text x="92" y="675" fontSize="15" transform="rotate(-12 92 675)">1001100111</text>
                <text x="232" y="628" fontSize="20" transform="rotate(-17 232 628)">10101011</text>
                <text x="390" y="602" fontSize="20" transform="rotate(6 390 602)">01010111110</text>
            </g>
        </svg>
    );
}

export default function App() {
    return (
        <div className="min-h-screen flex flex-col bg-white overflow-hidden">
            <Toolbars />
            <main className="relative flex-1 overflow-hidden bg-linear-to-b from-[#8aaace] to-[#98b4d6]">
                <Wallpaper />
                <MiniWindow className="-left-2 top-5" />
                <MiniWindow className="left-44 top-[25px]" />
                <MiniWindow className="left-[357px] top-[23px]" />
                <MiniWindow className="-left-[29px] top-[501px]" />
                <MiniWindow className="left-[156px] top-[507px]" />
                <MiniWindow className="left-[156px] top-[553px]" />
                <ChartWindow
                    className="left-[531px] right-0 top-[5px] h-[589px] pr-[2px]"
                    title="Chart3 (Zeitbar 5 min)"
                    symbol="DAX (Indizes Xetra)"
                    period="17.05.2012 11:50 - 17.05.2012 14:45"
                    caption={<span className="pl-[222px]">0)</span>}
                    interval="5 mins"
                    thumb="w-[29px]"
                >
                    <MinuteChart />
                </ChartWindow>
                <ChartWindow
                    className="-left-[33px] w-[790px] top-[29px] h-[487px] pr-2"
                    title="Chart27 (Täglich)"
                    symbol="DAX (Indizes Xetra)"
                    period="16.02.2012 - 19.05.2012"
                    caption={<span className="pl-[6px]"><span className="text-[#00cc00]">DAX P-IN.</span> move(50, 0) move(200, 0) boll(20, 2, -2)</span>}
                    interval="täglich"
                    thumb="w-[37px]"
                >
                    <DailyChart />
                </ChartWindow>
            </main>
            <footer className="h-[5px] bg-[#f8f8f8] border-t border-white"><div className="mt-px h-px bg-[#909090]" /></footer>
        </div>
    );
}
